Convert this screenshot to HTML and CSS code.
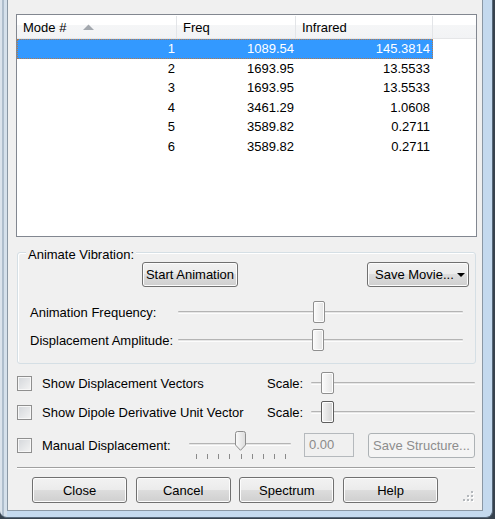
FILE: index.html
```html
<!DOCTYPE html>
<html lang="en">
<head>
    <meta charset="UTF-8">
    <title>Vibrations</title>
    <link rel="stylesheet" href="styles.css">
</head>
<body>
<div class="desk">
    <div class="frame">
        <div class="dialog">

            <div class="modes">
                <div class="modes-head">
                    <div class="hcell hcell-mode">Mode #
                        <svg class="sort-arrow" width="11" height="6" viewBox="0 0 11 6"><path d="M0 6 L5.5 0.5 L11 6 Z" fill="#a3a8ae"/></svg>
                    </div>
                    <div class="hcell hcell-freq">Freq</div>
                    <div class="hcell hcell-ir">Infrared</div>
                    <div class="hcell hcell-fill"></div>
                </div>
                <div class="mode-row selected"><span class="c-mode">1</span><span class="c-freq">1089.54</span><span class="c-ir">145.3814</span></div>
                <div class="mode-row"><span class="c-mode">2</span><span class="c-freq">1693.95</span><span class="c-ir">13.5533</span></div>
                <div class="mode-row"><span class="c-mode">3</span><span class="c-freq">1693.95</span><span class="c-ir">13.5533</span></div>
                <div class="mode-row"><span class="c-mode">4</span><span class="c-freq">3461.29</span><span class="c-ir">1.0608</span></div>
                <div class="mode-row"><span class="c-mode">5</span><span class="c-freq">3589.82</span><span class="c-ir">0.2711</span></div>
                <div class="mode-row"><span class="c-mode">6</span><span class="c-freq">3589.82</span><span class="c-ir">0.2711</span></div>
            </div>

            <div class="group">
                <div class="group-title">Animate Vibration:</div>
                <div class="group-buttons">
                    <button class="btn btn-start">Start Animation</button>
                    <button class="btn btn-movie">Save Movie...<span class="caret"></span></button>
                </div>
                <div class="slider-row">
                    <span class="slider-label">Animation Frequency:</span>
                    <div class="track track-anim"><span class="groove"></span><span class="thumb" style="left:135px"></span></div>
                </div>
                <div class="slider-row">
                    <span class="slider-label">Displacement Amplitude:</span>
                    <div class="track track-anim"><span class="groove"></span><span class="thumb" style="left:134px"></span></div>
                </div>
            </div>

            <div class="opt-row opt-first">
                <span class="check"></span>
                <span class="opt-label">Show Displacement Vectors</span>
                <span class="scale-label">Scale:</span>
                <div class="track track-scale"><span class="groove"></span><span class="thumb thumb-scale" style="left:10px"></span></div>
            </div>
            <div class="opt-row opt-second">
                <span class="check"></span>
                <span class="opt-label">Show Dipole Derivative Unit Vector</span>
                <span class="scale-label">Scale:</span>
                <div class="track track-scale"><span class="groove"></span><span class="thumb thumb-scale thumb-hot" style="left:10px"></span></div>
            </div>
            <div class="opt-row opt-third">
                <span class="check"></span>
                <span class="opt-label opt-label-short">Manual Displacement:</span>
                <div class="track track-manual">
                    <span class="groove"></span>
                    <svg class="pointer" style="left:46px" width="11" height="20" viewBox="0 0 11 20">
                        <defs>
                            <linearGradient id="ptrFill" x1="0" y1="0" x2="1" y2="0">
                                <stop offset="0" stop-color="#fafafa"/>
                                <stop offset="1" stop-color="#dcdcdc"/>
                            </linearGradient>
                        </defs>
                        <path d="M0.5 2.5 Q0.5 0.5 2.5 0.5 H8.5 Q10.5 0.5 10.5 2.5 V14 L5.5 19.3 L0.5 14 Z" fill="url(#ptrFill)" stroke="#8d8d8d"/>
                    </svg>
                    <div class="ticks">
                        <i></i><i></i><i></i><i></i><i></i><i></i><i></i><i></i><i></i>
                    </div>
                </div>
                <span class="num-box">0.00</span>
                <button class="btn btn-save" disabled>Save Structure...</button>
            </div>

            <div class="sep"></div>

            <div class="actions">
                <button class="btn btn-action">Close</button>
                <button class="btn btn-action">Cancel</button>
                <button class="btn btn-action">Spectrum</button>
                <button class="btn btn-action">Help</button>
                <svg class="grip" width="11" height="11" viewBox="0 0 11 11">
                    <g fill="#fff">
                        <rect x="9" y="1" width="2" height="2"/>
                        <rect x="5" y="5" width="2" height="2"/><rect x="9" y="5" width="2" height="2"/>
                        <rect x="1" y="9" width="2" height="2"/><rect x="5" y="9" width="2" height="2"/><rect x="9" y="9" width="2" height="2"/>
                    </g>
                    <g fill="#b3b7bb">
                        <rect x="8" y="0" width="2" height="2"/>
                        <rect x="4" y="4" width="2" height="2"/><rect x="8" y="4" width="2" height="2"/>
                        <rect x="0" y="8" width="2" height="2"/><rect x="4" y="8" width="2" height="2"/><rect x="8" y="8" width="2" height="2"/>
                    </g>
                </svg>
            </div>

        </div>
    </div>
</div>
</body>
</html>
```

FILE: styles.css
```css
* {
    box-sizing: border-box;
}
body {
    margin: 0;
    background-color: #37424e;
    font-family: "Liberation Sans", Arial, sans-serif;
    font-size: 13px;
    color: #000;
}
.desk {
    width: 495px;
    height: 519px;
    overflow: hidden;
}

/* window chrome */
.frame {
    width: 493px;
    height: 518px;
    padding: 0 9px 6px 7px;
    background:
        linear-gradient(to right, #dbe3ec 0, #dbe3ec 2px, #aebdcc 2px, #aebdcc 4px, #d5e0eb 4px, #d5e0eb 7px, transparent 7px),
        #c4d9ee;
    border-right: 1px solid #56687a;
    border-bottom: 1px solid #56687a;
    border-radius: 0 0 7px 7px;
}
.dialog {
    height: 511px;
    background-color: #f0f0f0;
    border: 1px solid #8a97a4;
    border-top: none;
    overflow: hidden;
}

/* mode list */
.modes {
    width: 461px;
    height: 223px;
    margin: 14px 0 0 8px;
    background-color: #fff;
    border: 1px solid #828790;
}
.modes-head {
    display: flex;
    height: 24px;
    padding-top: 1px;
    background: linear-gradient(#fff 0, #fff 45%, #f5f6f7 45%, #f2f3f5 100%);
    border-bottom: 1px solid #e5e6e8;
}
.hcell {
    display: flex;
    align-items: center;
    padding-left: 6px;
    border-right: 1px solid #e3e5e8;
}
.hcell-mode {
    width: 160px;
}
.hcell-freq {
    width: 119px;
}
.hcell-ir {
    width: 137px;
}
.hcell-fill {
    flex: 1;
    border-right: none;
}
.sort-arrow {
    margin-left: 17px;
    margin-top: -1px;
}
.mode-row {
    display: flex;
    width: 416px;
    height: 19.5px;
    line-height: 20.5px;
}
.mode-row span {
    text-align: right;
}
.c-mode {
    width: 160px;
    padding-right: 2px;
}
.c-freq {
    width: 119px;
    padding-right: 2px;
}
.c-ir {
    width: 137px;
    padding-right: 3px;
}
.mode-row.selected {
    background-color: #3399ff;
    color: #fff;
    outline: 1px dotted #b5794a;
    outline-offset: -1px;
}

/* buttons */
.btn {
    display: flex;
    align-items: center;
    justify-content: center;
    height: 25px;
    padding: 0;
    font: inherit;
    color: #000;
    border: 1px solid #707070;
    border-radius: 3px;
    background: linear-gradient(#f2f2f2 0, #ebebeb 50%, #dddddd 50%, #cfcfcf 100%);
    box-shadow: inset 0 0 0 1px #fcfcfc;
}
.btn:disabled {
    color: #8d8d8d;
    border-color: #adb2b5;
    background: #f4f4f4;
    box-shadow: none;
}

/* animate vibration group */
.group {
    width: 459px;
    height: 112px;
    margin: 15px 0 0 9px;
    border: 1px solid #d5dfe5;
    border-radius: 3px;
    box-shadow: inset 1px 1px 0 #fff;
}
.group-title {
    width: fit-content;
    margin: -6px 0 0 8px;
    padding: 0 2px;
    line-height: 15px;
    background-color: #f0f0f0;
}
.group-buttons {
    display: flex;
}
.btn-start {
    width: 96px;
    margin-left: 124px;
}
.btn-movie {
    width: 102px;
    margin-left: auto;
    margin-right: 6px;
    justify-content: flex-start;
    padding-left: 7px;
}
.caret {
    margin-left: 3px;
    margin-top: 1px;
    border-left: 4px solid transparent;
    border-right: 4px solid transparent;
    border-top: 4px solid #000;
}
.slider-row {
    display: flex;
    align-items: center;
    height: 28px;
    padding-left: 12px;
}
.slider-row:nth-of-type(3) {
    margin-top: 11px;
}
.slider-label {
    width: 148px;
}

/* trackbars */
.track {
    position: relative;
    display: flex;
    align-items: center;
    height: 100%;
}
.track-anim {
    width: 285px;
}
.groove {
    width: 100%;
    height: 3px;
    background-color: #e6e6e6;
    border-top: 1px solid #b4b4b4;
    border-bottom: 1px solid #fcfcfc;
    border-radius: 1px;
}
.thumb {
    position: absolute;
    top: 50%;
    width: 12px;
    height: 22px;
    margin-top: -11px;
    border: 1px solid #8f8f8f;
    border-radius: 2px;
    background: linear-gradient(to right, #fbfbfb, #e4e4e4);
    box-shadow: inset 0 0 0 1px #fdfdfd;
}
.thumb-scale {
    width: 13px;
}
.thumb-hot {
    border-color: #5e5e5e;
    background: linear-gradient(to right, #f4f4f4, #d2d2d2);
}

/* option rows */
.opt-row {
    display: flex;
    align-items: center;
    height: 26px;
    padding-left: 9px;
}
.opt-first {
    margin-top: 6px;
}
.opt-second {
    margin-top: 3px;
}
.opt-third {
    margin-top: 7px;
}
.check {
    width: 15px;
    height: 15px;
    margin-right: 10px;
    border: 1px solid #8f8f8f;
    background: linear-gradient(135deg, #d3d6da, #f4f4f4);
    box-shadow: inset 0 0 0 1px #f7f7f7;
}
.opt-label {
    width: 225px;
}
.opt-label-short {
    width: 147px;
}
.scale-label {
    width: 44px;
}
.track-scale {
    width: 164px;
}
.track-manual {
    width: 102px;
    margin-top: -2px;
}
.pointer {
    position: absolute;
    top: 0;
}
.ticks {
    position: absolute;
    left: 7px;
    right: 5px;
    top: 23px;
    display: flex;
    justify-content: space-between;
}
.ticks i {
    width: 1px;
    height: 5px;
    background-color: #8a8a8a;
}
.num-box {
    width: 50px;
    height: 24px;
    margin-left: 13px;
    padding-left: 4px;
    line-height: 22px;
    color: #8a8a8a;
    border: 1px solid #b5b9bd;
}
.btn-save {
    width: 107px;
    margin-left: 14px;
}

.sep {
    width: 458px;
    height: 2px;
    margin: 9px 0 0 9px;
    border-top: 1px solid #a0a0a0;
    border-bottom: 1px solid #fff;
}

/* bottom buttons */
.actions {
    display: flex;
    gap: 8.7px;
    height: 26px;
    margin-top: 8px;
    padding-left: 24px;
}
.btn-action {
    width: 95px;
    height: 26px;
}
.grip {
    align-self: flex-end;
    margin-left: auto;
    margin-right: 8px;
    margin-bottom: 1px;
}
```
